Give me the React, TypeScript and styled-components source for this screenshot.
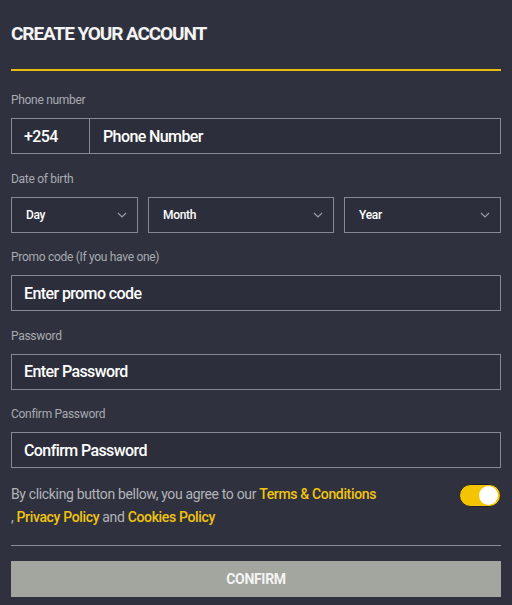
import styled, { createGlobalStyle } from "styled-components";

const GlobalStyle = createGlobalStyle`
  html, body {
    margin: 0;
    padding: 0;
    background: #2f323e;
  }
  * { box-sizing: border-box; }
`;

const Chevron = () => (
  <svg width="10" height="6" viewBox="0 0 10 6" fill="none">
    <path d="M1 1L5 5L9 1" stroke="#9a9ca4" strokeWidth="1.2" />
  </svg>
);

const App = () => {
  return (
    <>
      <GlobalStyle />
      <Page>
        <Title>CREATE YOUR ACCOUNT</Title>
        <Accent />

        <Field first>
          <Label>Phone number</Label>
          <Box>
            <Prefix>+254</Prefix>
            <PhoneText>Phone Number</PhoneText>
          </Box>
        </Field>

        <Field>
          <Label>Date of birth</Label>
          <SelectRow>
            <Select width="127px">
              <span>Day</span>
              <Chevron />
            </Select>
            <Select width="186px">
              <span>Month</span>
              <Chevron />
            </Select>
            <Select width="157px">
              <span>Year</span>
              <Chevron />
            </Select>
          </SelectRow>
        </Field>

        <Field>
          <Label>Promo code (If you have one)</Label>
          <Input>Enter promo code</Input>
        </Field>

        <Field>
          <Label>Password</Label>
          <Input>Enter Password</Input>
        </Field>

        <Field>
          <Label>Confirm Password</Label>
          <Input>Confirm Password</Input>
        </Field>

        <Terms>
          <TermsText>
            By clicking button bellow, you agree to our <Link>Terms &amp; Conditions</Link>
            <br />, <Link>Privacy Policy</Link> and <Link>Cookies Policy</Link>
          </TermsText>
          <Toggle>
            <Knob />
          </Toggle>
        </Terms>

        <Divider />
        <Button>CONFIRM</Button>
      </Page>
    </>
  );
};

export default App;

const Page = styled.div`
  width: 512px;
  height: 605px;
  padding: 0 11px;
  font-family: Roboto, "Liberation Sans", sans-serif;
  color: #fff;
  display: flex;
  flex-direction: column;
`;

const Title = styled.h1`
  margin: 23px 0 0;
  font-size: 19px;
  line-height: 22px;
  font-weight: 700;
  letter-spacing: -1.1px;
  color: #f4f4f4;
`;

const Accent = styled.div`
  margin-top: 24px;
  height: 2px;
  flex-shrink: 0;
  background-color: #e9bd0d;
`;

const Field = styled.div<{ first?: boolean }>`
  display: flex;
  flex-direction: column;
  margin-top: ${({ first }) => (first ? "22px" : "17.5px")};
`;

const Label = styled.div`
  font-size: 12px;
  line-height: 14px;
  letter-spacing: -0.3px;
  color: #a8aab1;
  margin-bottom: 11px;
`;

const Box = styled.div`
  height: 36px;
  flex-shrink: 0;
  border: 1px solid #868993;
  background: #2c2f3b;
  display: flex;
  align-items: center;
  font-size: 16px;
  font-weight: 500;
  letter-spacing: -0.6px;
`;

const Prefix = styled.div`
  width: 78px;
  height: 100%;
  border-right: 1px solid #868993;
  display: flex;
  align-items: center;
  padding-left: 12px;
`;

const PhoneText = styled.div`
  padding-left: 13px;
`;

const Input = styled(Box)`
  padding-left: 12px;
`;

const SelectRow = styled.div`
  display: flex;
  justify-content: space-between;
`;

const Select = styled(Box)<{ width: string }>`
  width: ${({ width }) => width};
  justify-content: space-between;
  padding: 0 10px 0 14px;
  font-size: 12px;
  letter-spacing: -0.3px;
`;

const Terms = styled.div`
  margin-top: 15px;
  display: flex;
  justify-content: space-between;
  align-items: flex-start;
`;

const TermsText = styled.div`
  font-size: 14px;
  line-height: 23px;
  letter-spacing: -0.35px;
  color: #b2b4ba;
`;

const Link = styled.span`
  color: #f2c40f;
  font-weight: 500;
`;

const Toggle = styled.div`
  width: 42px;
  height: 23px;
  margin-top: 1px;
  border-radius: 12px;
  background: #f5c400;
  border: 1px solid #1d1f26;
  display: flex;
  align-items: center;
  justify-content: flex-end;
  padding-right: 2px;
`;

const Knob = styled.div`
  width: 19px;
  height: 19px;
  border-radius: 50%;
  background: #fff;
`;

const Divider = styled.div`
  margin-top: 16px;
  height: 1px;
  flex-shrink: 0;
  background: #8a8d95;
`;

const Button = styled.div`
  margin-top: 15px;
  height: 36px;
  flex-shrink: 0;
  background: #a3a69f;
  display: flex;
  align-items: center;
  justify-content: center;
  font-size: 14px;
  font-weight: 700;
  color: #f4f4f4;
  letter-spacing: -0.3px;
`;
